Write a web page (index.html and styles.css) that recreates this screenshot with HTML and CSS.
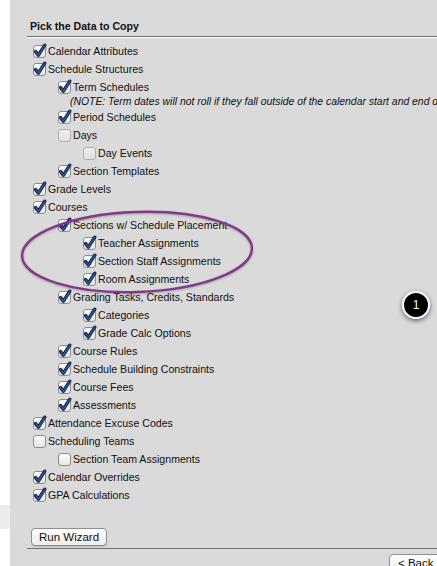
FILE: index.html
```html
<!DOCTYPE html>
<html lang="en">

<head>
    <meta charset="UTF-8" />
    <meta name="viewport" content="width=device-width, initial-scale=1" />
    <title>Copy Calendar Wizard</title>
    <link rel="stylesheet" href="styles.css">
</head>

<body>
    <svg class="defs" width="0" height="0">
        <defs>
            <linearGradient id="boxFill" x1="0" y1="0" x2="0" y2="1">
                <stop offset="0" stop-color="#ffffff" />
                <stop offset="1" stop-color="#e4e4e4" />
            </linearGradient>
            <symbol id="box" viewBox="0 0 13 13">
                <rect x="0.5" y="0.5" width="12" height="12" rx="2.5" fill="url(#boxFill)" stroke="#8c8c8c" />
            </symbol>
            <symbol id="tick" viewBox="0 0 13 13" overflow="visible">
                <path d="M2.6 6.6 L5.4 10.2 L11.8 0.2" fill="none" stroke="#0d1f3f" stroke-width="3.4" stroke-linecap="round" stroke-linejoin="round" />
                <path d="M2.6 6.6 L5.4 10.2 L11.8 0.2" fill="none" stroke="#2d5592" stroke-width="1.6" stroke-linecap="round" stroke-linejoin="round" />
            </symbol>
        </defs>
    </svg>

    <div class="side">
        <div class="side-band"></div>
    </div>

    <div class="panel">
        <div class="inner">
            <h2 class="title">Pick the Data to Copy</h2>

            <div class="tree">
                <label class="row lv0 on">Calendar Attributes</label>
                <label class="row lv0 on">Schedule Structures</label>
                <label class="row lv1 on">Term Schedules</label>
                <div class="note">(NOTE: Term dates will not roll if they fall outside of the calendar start and end dates)</div>
                <label class="row lv1 on">Period Schedules</label>
                <label class="row lv1 dim">Days</label>
                <label class="row lv2 dim">Day Events</label>
                <label class="row lv1 on">Section Templates</label>
                <label class="row lv0 on">Grade Levels</label>
                <label class="row lv0 on">Courses</label>
                <label class="row lv1 on">Sections w/ Schedule Placement</label>
                <label class="row lv2 on">Teacher Assignments</label>
                <label class="row lv2 on">Section Staff Assignments</label>
                <label class="row lv2 on">Room Assignments</label>
                <label class="row lv1 on">Grading Tasks, Credits, Standards</label>
                <label class="row lv2 on">Categories</label>
                <label class="row lv2 on">Grade Calc Options</label>
                <label class="row lv1 on">Course Rules</label>
                <label class="row lv1 on">Schedule Building Constraints</label>
                <label class="row lv1 on">Course Fees</label>
                <label class="row lv1 on">Assessments</label>
                <label class="row lv0 on">Attendance Excuse Codes</label>
                <label class="row lv0">Scheduling Teams</label>
                <label class="row lv1">Section Team Assignments</label>
                <label class="row lv0 on">Calendar Overrides</label>
                <label class="row lv0 on">GPA Calculations</label>
            </div>

            <button class="btn run">Run Wizard</button>

            <div class="footer">
                <button class="btn back">&lt; Back</button>
            </div>
        </div>
    </div>

    <!-- callout drawn over the assignment rows -->
    <svg class="ring" width="260" height="100" viewBox="0 0 260 100">
        <ellipse cx="130" cy="50" rx="115" ry="40" transform="rotate(-2 130 50)" fill="none" stroke="#84388a" stroke-width="2.4" />
    </svg>

    <div class="badge">1</div>

    <script>
        // put the box + tick in front of every row label
        document.querySelectorAll(".row").forEach(row => {
            const on = row.classList.contains("on");
            const svg = '<svg class="cb" width="13" height="13" viewBox="0 0 13 13">' +
                '<use href="#box" width="13" height="13" />' +
                (on ? '<use href="#tick" width="13" height="13" />' : '') +
                '</svg>';
            row.insertAdjacentHTML("afterbegin", svg);
        });
    </script>
</body>

</html>
```

FILE: styles.css
```css
html,
body {
    height: 100%;
}

body {
    margin: 0;
    padding: 0;
    display: flex;
    overflow: hidden;
    background-color: #fff;
    color: #111;
    font-family: "Liberation Sans", Arial, sans-serif;
    position: relative;
}

.defs {
    position: absolute;
}

.side {
    width: 10px;
    flex: none;
    padding-top: 505px;
}

.side-band {
    height: 24px;
    background-color: #ececec;
}

.panel {
    flex: 1;
    background-color: #dadada;
    min-width: 0;
}

.inner {
    margin-left: 17px;
    padding-top: 17px;
}

.title {
    margin: 0;
    padding-left: 3px;
    font-size: 10.6px;
    font-weight: bold;
    line-height: 19px;
    border-bottom: 1px solid #6e6e6e;
    box-shadow: 0 1px 0 #fff;
}

.tree {
    margin-top: 5px;
    font-size: 10.6px;
}

.row {
    display: flex;
    align-items: center;
    gap: 2px;
    height: 18px;
    white-space: nowrap;
}

.row .cb {
    flex: none;
    overflow: visible;
}

.lv0 {
    padding-left: 6px;
}

.lv1 {
    padding-left: 31px;
}

.lv2 {
    padding-left: 56px;
}

.dim .cb {
    opacity: 0.55;
}

.note {
    height: 12px;
    line-height: 12px;
    padding-left: 43px;
    font-style: italic;
    font-size: 10.4px;
    white-space: nowrap;
    overflow: hidden;
}

.btn {
    font-family: "Liberation Sans", Arial, sans-serif;
    font-size: 11.5px;
    color: #111;
    height: 18px;
    padding: 0 7px;
    white-space: nowrap;
    border: 1px solid #8f8f8f;
    border-radius: 4px;
    background: linear-gradient(#ffffff, #ececec);
    box-shadow: 0 1px 1px rgba(0, 0, 0, 0.15);
}

.run {
    display: block;
    margin: 24px 0 0 4px;
}

.footer {
    margin-top: 2px;
    border-top: 1px solid #727272;
    padding-top: 4px;
}

.back {
    margin-left: 362px;
    padding-left: 8px;
}

.ring {
    position: absolute;
    left: 7px;
    top: 202px;
    filter: drop-shadow(0 1px 1px rgba(0, 0, 0, 0.25));
}

.badge {
    position: absolute;
    left: 402px;
    top: 291px;
    width: 24px;
    height: 24px;
    border: 2px solid #fff;
    border-radius: 50%;
    background-color: #000;
    color: #fff;
    font-size: 12px;
    line-height: 24px;
    text-align: center;
    box-shadow: 0 2px 5px rgba(0, 0, 0, 0.5);
}
```
